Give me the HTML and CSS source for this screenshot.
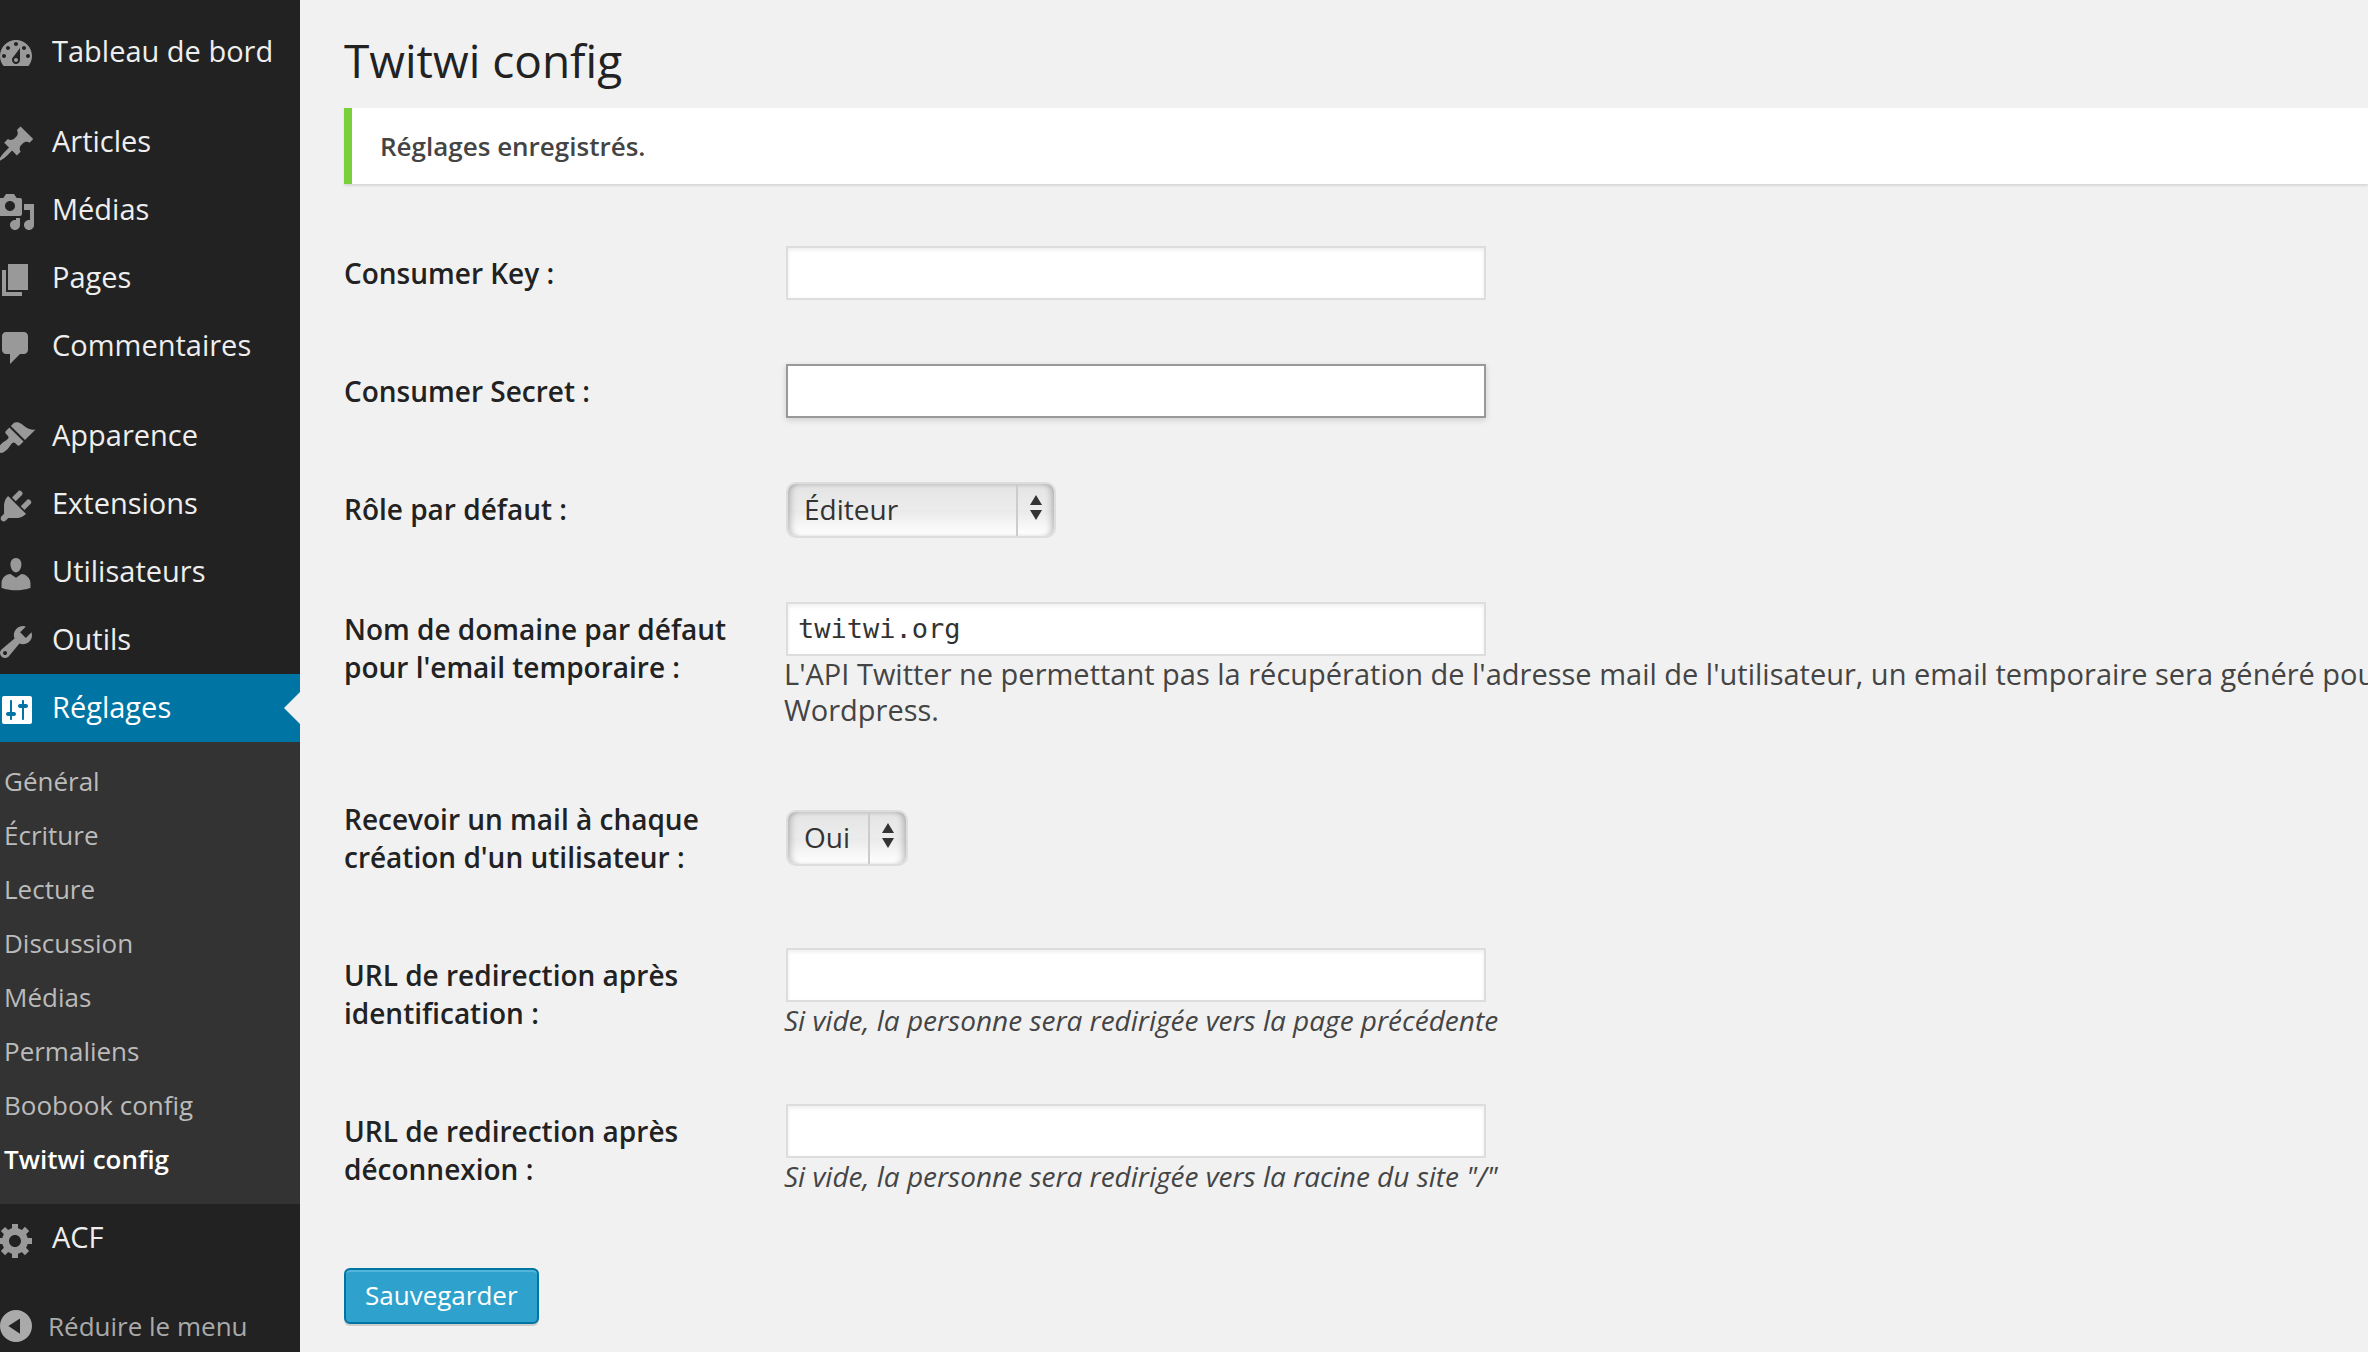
FILE: index.html
```html
<!DOCTYPE html>
<html lang="fr">
<head>
<meta charset="utf-8">
<title>Twitwi config</title>
<link rel="stylesheet" href="styles.css">
</head>
<body>
<div class="layout">
  <nav class="sidebar" aria-label="Menu principal">
    <ul class="menu">
      <li><a class="item" href="#"><svg class="icon" viewBox="0 0 20 20"><path d="M3.76 16h12.48c1.1-1.37 1.76-3.11 1.76-5 0-4.42-3.58-8-8-8s-8 3.58-8 8c0 1.89.66 3.63 1.76 5zM10 4c.55 0 1 .45 1 1s-.45 1-1 1-1-.45-1-1 .45-1 1-1zM6 6c.55 0 1 .45 1 1s-.45 1-1 1-1-.45-1-1 .45-1 1-1zm8 0c.55 0 1 .45 1 1s-.45 1-1 1-1-.45-1-1 .45-1 1-1zm-5.37 5.55L12 7v6c0 1.1-.9 2-2 2s-2-.9-2-2c0-.57.24-1.08.63-1.45zM4 10c.55 0 1 .45 1 1s-.45 1-1 1-1-.45-1-1 .45-1 1-1zm12 0c.55 0 1 .45 1 1s-.45 1-1 1-1-.45-1-1 .45-1 1-1zm-5 3c0-.55-.45-1-1-1s-1 .45-1 1 .45 1 1 1 1-.45 1-1z"/></svg>Tableau de bord</a></li>
      <li class="group-start"><a class="item" href="#"><svg class="icon" viewBox="0 0 20 20"><path d="M10.44 3.02l1.82-1.82 6.36 6.35-1.83 1.82c-1.05-.68-2.48-.57-3.41.36l-.75.75c-.92.93-1.04 2.35-.35 3.41l-1.83 1.82-2.41-2.41-2.8 2.79c-.42.42-3.38 2.71-3.8 2.29s1.86-3.39 2.28-3.81l2.79-2.79L4.1 9.36l1.83-1.82c1.05.69 2.48.57 3.4-.36l.75-.75c.93-.92 1.05-2.35.36-3.41z"/></svg>Articles</a></li>
      <li><a class="item" href="#"><svg class="icon" viewBox="0 0 20 20"><path d="M13 11V4c0-.55-.45-1-1-1h-1.67L9 1H5L3.67 3H2c-.55 0-1 .45-1 1v7c0 .55.45 1 1 1h10c.55 0 1-.45 1-1zM7 4.5c1.38 0 2.5 1.12 2.5 2.5S8.38 9.5 7 9.5 4.5 8.38 4.5 7 5.62 4.5 7 4.5zM14 6h5v10.5c0 1.38-1.12 2.5-2.5 2.5S14 17.88 14 16.5s1.12-2.5 2.5-2.5c.17 0 .34.02.5.05V9h-3V6zm-4 8.05V13h2v3.5c0 1.38-1.12 2.5-2.5 2.5S7 17.88 7 16.5 8.12 14 9.5 14c.17 0 .34.02.5.05z"/></svg>Médias</a></li>
      <li><a class="item" href="#"><svg class="icon" viewBox="0 0 20 20"><path d="M6 15V2h10v13H6zm-1 1h8v2H3V5h2v11z"/></svg>Pages</a></li>
      <li><a class="item" href="#"><svg class="icon" viewBox="0 0 20 20"><path d="M5 2h9c1.1 0 2 .9 2 2v7c0 1.1-.9 2-2 2h-2l-5 5v-5H5c-1.1 0-2-.9-2-2V4c0-1.1.9-2 2-2z"/></svg>Commentaires</a></li>
      <li class="group-start"><a class="item" href="#"><svg class="icon" viewBox="0 0 20 20"><path d="M14.48 11.06L7.41 3.99l1.5-1.5c.5-.56 2.3-.47 3.51.32 1.21.8 1.43 1.28 2.91 2.1 1.18.64 2.45 1.26 4.45.85zm-.71.71L6.7 4.7 4.93 6.47c-.39.39-.39 1.02 0 1.41l1.06 1.06c.39.39.39 1.03 0 1.42-.6.6-1.43 1.11-2.21 1.69-.35.26-.7.53-1.01.84C1.43 14.23.4 16.08 1.4 17.07c.99 1 2.84-.03 4.18-1.36.31-.31.58-.66.85-1.02.57-.78 1.08-1.61 1.69-2.21.39-.39 1.02-.39 1.41 0l1.06 1.06c.39.39 1.02.39 1.41 0z"/></svg>Apparence</a></li>
      <li><a class="item" href="#"><svg class="icon" viewBox="0 0 20 20"><path d="M13.11 4.36L9.87 7.6 8 5.73l3.24-3.24c.35-.34 1.05-.2 1.56.32.52.51.66 1.21.31 1.55zm-8 1.77l.91-1.12 9.01 9.01-1.19.84c-.71.71-2.63 1.16-3.82 1.16H6.14L4.9 17.26c-.59.59-1.54.59-2.12 0-.59-.58-.59-1.53 0-2.12l1.24-1.24v-3.88c0-1.13.4-3.19 1.09-3.89zm7.26 3.97l3.24-3.24c.34-.35 1.04-.21 1.55.31.52.51.66 1.21.31 1.55l-3.24 3.25z"/></svg>Extensions</a></li>
      <li><a class="item" href="#"><svg class="icon" viewBox="0 0 20 20"><path d="M10 9.25c-2.27 0-2.73-3.44-2.73-3.44C7 4.02 7.82 2 9.97 2c2.16 0 2.98 2.02 2.71 3.81 0 0-.41 3.44-2.68 3.44zm0 2.57L12.72 10c2.39 0 4.52 2.33 4.52 4.53v2.49s-3.65 1.13-7.24 1.13c-3.65 0-7.24-1.13-7.24-1.13v-2.49c0-2.25 1.94-4.48 4.47-4.48z"/></svg>Utilisateurs</a></li>
      <li><a class="item" href="#"><svg class="icon" viewBox="0 0 20 20"><path d="M16.68 9.77c-1.34 1.34-3.3 1.67-4.95.99l-5.41 6.52c-.99.99-2.59.99-3.58 0s-.99-2.59 0-3.57l6.52-5.42c-.68-1.65-.35-3.61.99-4.95 1.28-1.28 3.12-1.62 4.72-1.06l-2.89 2.89 2.82 2.82 2.86-2.87c.53 1.58.18 3.39-1.08 4.65zM3.81 16.21c.4.39 1.04.39 1.43 0 .4-.4.4-1.04 0-1.43-.39-.4-1.03-.4-1.43 0-.39.39-.39 1.03 0 1.43z"/></svg>Outils</a></li>
      <li>
        <a class="item current" href="#"><svg class="icon" viewBox="0 0 20 20"><path d="M18 16V4c0-.55-.45-1-1-1H4c-.55 0-1 .45-1 1v12c0 .55.45 1 1 1h13c.55 0 1-.45 1-1zM8 11h1c.55 0 1 .45 1 1s-.45 1-1 1H8v1.5c0 .28-.22.5-.5.5s-.5-.22-.5-.5V13H6c-.55 0-1-.45-1-1s.45-1 1-1h1V5.5c0-.28.22-.5.5-.5s.5.22.5.5V11zm5-2h-1c-.55 0-1-.45-1-1s.45-1 1-1h1V5.5c0-.28.22-.5.5-.5s.5.22.5.5V7h1c.55 0 1 .45 1 1s-.45 1-1 1h-1v5.5c0 .28-.22.5-.5.5s-.5-.22-.5-.5V9z"/></svg>Réglages</a>
        <ul class="submenu">
          <li><a href="#">Général</a></li>
          <li><a href="#">Écriture</a></li>
          <li><a href="#">Lecture</a></li>
          <li><a href="#">Discussion</a></li>
          <li><a href="#">Médias</a></li>
          <li><a href="#">Permaliens</a></li>
          <li><a href="#">Boobook config</a></li>
          <li><a class="active" href="#" aria-current="page">Twitwi config</a></li>
        </ul>
      </li>
      <li><a class="item" href="#"><svg class="icon" viewBox="0 0 20 20"><path d="M18 12h-2.18c-.17.7-.44 1.35-.81 1.93l1.54 1.54-2.1 2.1-1.54-1.54c-.58.36-1.23.63-1.91.79V19H8v-2.18c-.68-.16-1.33-.43-1.91-.79l-1.54 1.54-2.12-2.12 1.54-1.54c-.36-.58-.63-1.23-.79-1.91H1V9.03h2.17c.16-.7.44-1.35.8-1.94L2.43 5.55l2.1-2.1 1.54 1.54c.58-.37 1.24-.64 1.93-.81V2h3v2.18c.68.16 1.33.43 1.91.79l1.54-1.54 2.12 2.12-1.54 1.54c.36.59.64 1.24.8 1.94H18V12zm-8.5 1.5c1.66 0 3-1.34 3-3s-1.34-3-3-3-3 1.34-3 3 1.34 3 3 3z"/></svg>ACF</a></li>
    </ul>
    <button class="collapse" type="button"><svg class="icon" viewBox="0 0 20 20"><path fill-rule="evenodd" d="M10 2a8 8 0 1 0 0 16 8 8 0 0 0 0-16zM12 6.2v7.7L6.2 10z"/></svg>Réduire le menu</button>
  </nav>

  <main class="content">
    <h1 class="title">Twitwi config</h1>
    <div class="notice" role="status"><strong>Réglages enregistrés.</strong></div>
    <form class="settings">
      <div class="row">
        <label for="key">Consumer Key :</label>
        <div class="field"><input class="text" type="text" id="key"></div>
      </div>
      <div class="row">
        <label for="secret">Consumer Secret :</label>
        <div class="field"><input class="text focused" type="text" id="secret"></div>
      </div>
      <div class="row">
        <label for="role">Rôle par défaut :</label>
        <div class="field">
          <div class="select wide">
            <select id="role"><option>Éditeur</option></select>
            <svg class="arrows" viewBox="0 0 38 52"><path d="M18 11l6 10H12zM18 36l6-10H12z"/></svg>
          </div>
        </div>
      </div>
      <div class="row">
        <label for="domain">Nom de domaine par défaut pour l'email temporaire :</label>
        <div class="field">
          <input class="text" type="text" id="domain" value="twitwi.org">
          <p class="help">L'API Twitter ne permettant pas la récupération de l'adresse mail de l'utilisateur, un email temporaire sera généré pour<br>Wordpress.</p>
        </div>
      </div>
      <div class="row middle">
        <label for="mail">Recevoir un mail à chaque création d'un utilisateur :</label>
        <div class="field">
          <div class="select narrow">
            <select id="mail"><option>Oui</option></select>
            <svg class="arrows" viewBox="0 0 38 52"><path d="M18 11l6 10H12zM18 36l6-10H12z"/></svg>
          </div>
        </div>
      </div>
      <div class="row">
        <label for="login">URL de redirection après identification :</label>
        <div class="field">
          <input class="text" type="text" id="login">
          <p class="help hint"><em>Si vide, la personne sera redirigée vers la page précédente</em></p>
        </div>
      </div>
      <div class="row">
        <label for="logout">URL de redirection après déconnexion :</label>
        <div class="field">
          <input class="text" type="text" id="logout">
          <p class="help hint"><em>Si vide, la personne sera redirigée vers la racine du site "/"</em></p>
        </div>
      </div>
      <button class="save" type="button">Sauvegarder</button>
    </form>
  </main>
</div>
</body>
</html>
```
FILE: styles.css
```css
* {
  box-sizing: border-box;
}

body {
  margin: 0;
  background: #f1f1f1;
  color: #444;
  font: 28px/36px "Open Sans", sans-serif;
}

ul, p, h1 {
  margin: 0;
  padding: 0;
}

ul {
  list-style: none;
}

a {
  text-decoration: none;
}

.layout {
  display: grid;
  grid-template-columns: 300px minmax(0, 1fr);
  min-height: 100vh;
}

/* Sidebar */
.sidebar {
  background: #222;
  padding-top: 18px;
  overflow: hidden;
}

.group-start {
  margin-top: 22px;
}

.item {
  position: relative;
  display: flex;
  align-items: center;
  height: 68px;
  padding-bottom: 2px;
  gap: 16px;
  color: #eee;
  font-size: 29px;
  font-weight: 500;
}

.icon {
  flex: none;
  width: 40px;
  height: 40px;
  margin-left: -4px;
  fill: #999;
}

.item .icon {
  margin-top: 6px;
}

.item.current {
  background: #0074a2;
  color: #fff;
}

.current .icon {
  fill: #fff;
}

.item.current::after {
  content: "";
  position: absolute;
  right: 0;
  top: 18px;
  border: 16px solid transparent;
  border-left: 0;
  border-right-color: #f1f1f1;
}

.submenu {
  background: #333;
  padding: 12px 0 18px;
}

.submenu a {
  display: block;
  padding-left: 4px;
  color: #bbb;
  font-size: 26px;
  line-height: 54px;
}

.submenu .active {
  color: #fff;
  font-weight: 600;
}

.collapse {
  display: flex;
  align-items: center;
  gap: 12px;
  width: 100%;
  height: 52px;
  margin-top: 28px;
  padding: 0;
  border: 0;
  background: none;
  color: #aaa;
  font: inherit;
  font-size: 26px;
}

.collapse .icon {
  fill: #aaa;
}

/* Page content */
.content {
  padding: 28px 0 0 44px;
  overflow: hidden;
}

.title {
  margin-bottom: 16px;
  color: #222;
  font-size: 46px;
  font-weight: 400;
  line-height: 64px;
}

.notice {
  padding: 20px 28px;
  border-left: 8px solid #7ad03a;
  background: #fff;
  box-shadow: 0 2px 2px rgba(0, 0, 0, 0.1);
  font-size: 26px;
}

.notice strong {
  font-weight: 600;
}

.settings {
  margin-top: 30px;
}

.row {
  display: grid;
  grid-template-columns: 400px minmax(0, 1fr);
  column-gap: 40px;
}

.row.middle {
  align-items: center;
}

.row label {
  padding: 40px 0;
  color: #222;
  font-weight: 600;
  line-height: 38px;
}

.field {
  padding: 30px 0;
}

.text {
  display: block;
  width: 700px;
  height: 54px;
  margin: 2px;
  padding: 0 10px 2px;
  border: 2px solid #ddd;
  background: #fff;
  box-shadow: inset 0 2px 4px rgba(0, 0, 0, 0.07);
  color: #333;
  font: 27px "DejaVu Sans Mono", monospace;
  outline: 0;
}

.text.focused {
  border-color: #999;
  box-shadow: 0 2px 6px rgba(0, 0, 0, 0.15);
}

.help {
  margin: -2px 0 2px;
  font-size: 29px;
  white-space: nowrap;
}

.help.hint {
  font-size: 28px;
}

.select {
  position: relative;
  height: 56px;
  margin: 2px;
}

.wide {
  width: 270px;
}

.narrow {
  width: 122px;
}

.select select {
  appearance: none;
  width: 100%;
  height: 100%;
  padding: 0 40px 2px 16px;
  border: 2px solid #ddd;
  border-radius: 10px;
  background: linear-gradient(#e4e4e4, #ececec 50%, #e9e9e9 50%, #fff);
  box-shadow: inset 6px 0 6px -3px rgba(0, 0, 0, 0.2), inset -6px 0 6px -3px rgba(0, 0, 0, 0.2), inset 0 2px 4px rgba(0, 0, 0, 0.07);
  color: #333;
  font: inherit;
}

.arrows {
  position: absolute;
  right: 0;
  top: 2px;
  width: 40px;
  height: 52px;
  border-left: 2px solid #ccc;
  fill: #333;
  pointer-events: none;
}

.save {
  height: 56px;
  margin-top: 40px;
  padding: 0 19px 2px;
  border: 2px solid #0074a2;
  border-radius: 6px;
  background: #2ea2cc;
  box-shadow: inset 0 2px 0 rgba(120, 200, 230, 0.5), 0 2px 0 rgba(0, 0, 0, 0.15);
  color: #fff;
  font: inherit;
  font-size: 26px;
  font-weight: 500;
}
```
